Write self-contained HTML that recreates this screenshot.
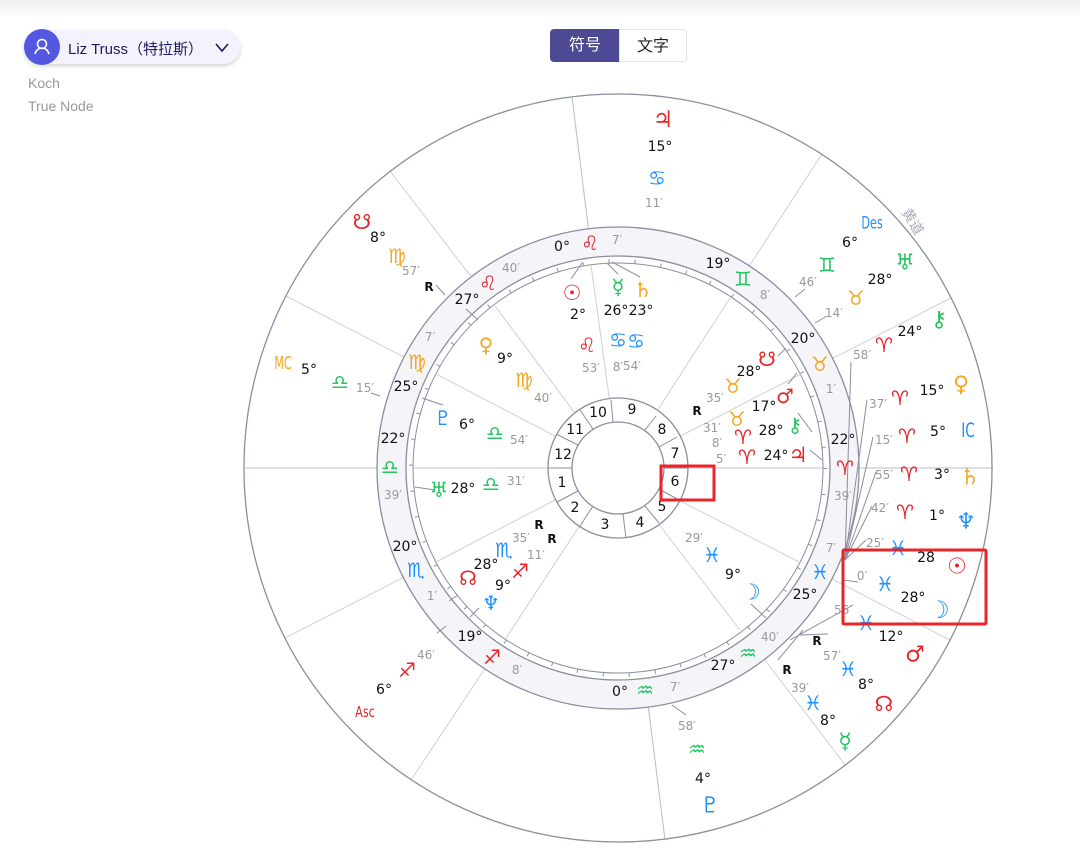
<!DOCTYPE html>
<html><head><meta charset="utf-8">
<style>
html,body{margin:0;padding:0;background:#fff;width:1080px;height:855px;overflow:hidden;font-family:"Liberation Sans","Noto Sans CJK SC",sans-serif}
.top{position:absolute;left:0;top:0;width:1080px;height:18px;background:linear-gradient(#f0f0f2,#fff)}
.pill{position:absolute;left:24px;top:30px;width:216px;height:34px;border-radius:17px;background:#f4f2fd;box-shadow:0 2px 4px rgba(0,0,0,.18)}
.av{position:absolute;left:0;top:0;width:36px;height:36px;margin-top:-1px;border-radius:18px;background:#5457e0}
.name{position:absolute;left:44px;top:8px;font-size:15px;color:#1d1a5c;white-space:nowrap}
.sub{position:absolute;left:28px;font-size:14px;color:#9a9a9a}
.seg{position:absolute;top:29px;height:33px;font-size:16px;line-height:33px;text-align:center;box-sizing:border-box}
svg text{font-family:"DejaVu Sans","Liberation Sans",sans-serif}
</style></head><body>
<div class="top"></div>
<div class="pill"><div class="av"><svg width="36" height="36"><circle cx="18" cy="15" r="4.5" fill="none" stroke="#fff" stroke-width="1.6"/><path d="M11 25c1-4 4-6 7-6s6 2 7 6" fill="none" stroke="#fff" stroke-width="1.6"/></svg></div>
<div class="name">Liz Truss（特拉斯）</div>
<svg style="position:absolute;left:190px;top:11px" width="16" height="12"><path d="M2 3l6 7 6-7" fill="none" stroke="#1d1a5c" stroke-width="1.6"/></svg></div>
<div class="sub" style="top:75px">Koch</div>
<div class="sub" style="top:98px">True Node</div>
<div class="seg" style="left:550px;width:70px;background:#4e4993;color:#fff;border-radius:4px 0 0 4px">符号</div>
<div class="seg" style="left:619px;width:68px;border:1px solid #e3e3e3;color:#222;border-radius:0 4px 4px 0">文字</div>

<svg width="1080" height="855" style="position:absolute;left:0;top:0" font-size="13" text-anchor="middle" dominant-baseline="central">
<g stroke="#d0d0d6" stroke-width="1">
<line x1="245" y1="468" x2="993" y2="468" stroke="#b9bcc8"/>
<line x1="572" y1="97" x2="665" y2="840" stroke="#b9bcc8"/>
<line x1="618" y1="468" x2="822" y2="154"/>
<line x1="618" y1="468" x2="951" y2="298"/>
<line x1="618" y1="468" x2="950" y2="640"/>
<line x1="618" y1="468" x2="846" y2="766"/>
<line x1="618" y1="468" x2="411" y2="780"/>
<line x1="618" y1="468" x2="285" y2="638"/>
<line x1="618" y1="468" x2="286" y2="296"/>
<line x1="618" y1="468" x2="390" y2="171"/>
</g>
<circle cx="618" cy="468" r="374" fill="none" stroke="#8a8ea0" stroke-width="1.3"/>
<circle cx="618" cy="468" r="226.5" fill="none" stroke="#f4f4f9" stroke-width="29"/>
<circle cx="618" cy="468" r="241" fill="none" stroke="#8a8ea0" stroke-width="1.3"/>
<circle cx="618" cy="468" r="212" fill="#fff" stroke="#8a8ea0" stroke-width="1.3"/>
<circle cx="618" cy="468" r="205" fill="none" stroke="#8a8ea0" stroke-width="1"/>
<circle cx="618" cy="468" r="207" fill="none" stroke="#8a8ea0" stroke-width="4" stroke-dasharray="1 25.1"/>
<g stroke="#d0d0d6">
<line x1="612" y1="418" x2="591" y2="265"/>
<line x1="648" y1="425" x2="730" y2="298"/>
<line x1="663" y1="445" x2="801" y2="374"/>
<line x1="663" y1="492" x2="801" y2="563"/>
<line x1="648" y1="510" x2="740" y2="630"/>
<line x1="590" y1="510" x2="506" y2="638"/>
<line x1="555" y1="500" x2="436" y2="562"/>
<line x1="555" y1="436" x2="436" y2="374"/>
<line x1="575" y1="413" x2="495" y2="306"/>
</g>
<line x1="413" y1="468" x2="823" y2="468" stroke="#c4c6d0"/>
<circle cx="618" cy="468" r="70" fill="#fff" stroke="#8a8ea0" stroke-width="1.3"/>
<circle cx="618" cy="468" r="46" fill="#fff" stroke="#8a8ea0" stroke-width="1.3"/>
<g stroke="#8a8ea0" stroke-width="1">
<line x1="613" y1="422" x2="611" y2="400"/><line x1="645" y1="430" x2="656" y2="416"/>
<line x1="659" y1="447" x2="677" y2="437"/><line x1="664" y1="468" x2="688" y2="468"/>
<line x1="659" y1="489" x2="679" y2="500"/><line x1="645" y1="506" x2="659" y2="523"/>
<line x1="623" y1="514" x2="626" y2="538"/><line x1="593" y1="506" x2="580" y2="526"/>
<line x1="578" y1="491" x2="557" y2="502"/><line x1="572" y1="468" x2="548" y2="468"/>
<line x1="578" y1="445" x2="556" y2="434"/><line x1="593" y1="429" x2="580" y2="410"/>
<line x1="845" y1="560" x2="851" y2="362"/><line x1="845" y1="560" x2="867" y2="400"/>
<line x1="845" y1="560" x2="873" y2="437"/><line x1="845" y1="560" x2="876" y2="472"/>
<line x1="845" y1="560" x2="872" y2="506"/><line x1="845" y1="560" x2="866" y2="540"/>
<line x1="843" y1="580" x2="858" y2="582"/><line x1="790" y1="640" x2="853" y2="605"/>
<line x1="778" y1="660" x2="803" y2="630"/><line x1="800" y1="635" x2="828" y2="634"/>
<line x1="795" y1="297" x2="805" y2="289"/><line x1="815" y1="323" x2="827" y2="316"/>
<line x1="571" y1="279" x2="582" y2="263"/><line x1="618" y1="274" x2="607" y2="263"/><line x1="640" y1="277" x2="612" y2="262"/>
<line x1="798" y1="413" x2="812" y2="432"/><line x1="810" y1="450" x2="822" y2="460"/>
<line x1="788" y1="384" x2="797" y2="373"/><line x1="778" y1="356" x2="786" y2="348"/>
<line x1="478" y1="320" x2="466" y2="309"/><line x1="443" y1="405" x2="422" y2="398"/>
<line x1="435" y1="490" x2="415" y2="487"/><line x1="458" y1="595" x2="449" y2="601"/>
<line x1="479" y1="608" x2="470" y2="617"/><line x1="751" y1="604" x2="766" y2="618"/>
<line x1="686" y1="715" x2="672" y2="705"/><line x1="437" y1="633" x2="446" y2="626"/>
<line x1="436" y1="285" x2="445" y2="295"/>
<line x1="371" y1="393" x2="380" y2="396"/>
</g>
<g font-size="14" fill="#111">
<text x="598" y="413">10</text><text x="632" y="410">9</text><text x="662" y="430">8</text><text x="675" y="454">7</text><text x="675" y="482">6</text><text x="662" y="507">5</text><text x="640" y="523">4</text><text x="605" y="525">3</text><text x="575" y="508">2</text><text x="562" y="483">1</text><text x="563" y="455">12</text><text x="575" y="430">11</text>
</g>
<g font-size="14" fill="#111">
<text x="660" y="147">15°</text><text x="378" y="238">8°</text><text x="309" y="370">5°</text>
<text x="850" y="243">6°</text><text x="880" y="280">28°</text><text x="910" y="332">24°</text><text x="932" y="391">15°</text><text x="938" y="432">5°</text><text x="942" y="475">3°</text><text x="937" y="516">1°</text>
<text x="926" y="558">28</text><text x="913" y="598">28°</text><text x="891" y="637">12°</text><text x="866" y="685">8°</text><text x="828" y="721">8°</text>
<text x="620" y="692">0°</text><text x="703" y="779">4°</text><text x="723" y="666">27°</text><text x="470" y="637">19°</text><text x="384" y="690">6°</text>
<text x="405" y="547">20°</text><text x="393" y="439">22°</text><text x="406" y="387">25°</text><text x="467" y="300">27°</text><text x="562" y="247">0°</text><text x="718" y="264">19°</text><text x="803" y="339">20°</text><text x="843" y="440">22°</text><text x="805" y="595">25°</text>
<text x="578" y="315">2°</text><text x="616" y="311">26°</text><text x="641" y="311">23°</text><text x="505" y="359">9°</text><text x="467" y="425">6°</text><text x="463" y="489">28°</text><text x="486" y="565">28°</text><text x="503" y="586">9°</text>
<text x="749" y="372">28°</text><text x="764" y="407">17°</text><text x="771" y="431">28°</text><text x="776" y="456">24°</text><text x="733" y="575">9°</text>
</g>
<g font-size="12" font-weight="bold" fill="#111">
<text x="429" y="287">R</text><text x="817" y="641">R</text><text x="787" y="670">R</text><text x="539" y="525">R</text><text x="552" y="539">R</text><text x="697" y="411">R</text>
</g>
<g font-size="12" fill="#999">
<text x="654" y="203">11′</text><text x="411" y="271">57′</text><text x="365" y="388">15′</text><text x="808" y="282">46′</text><text x="834" y="313">14′</text><text x="862" y="355">58′</text><text x="878" y="404">37′</text><text x="884" y="440">15′</text><text x="884" y="475">55′</text><text x="880" y="508">42′</text>
<text x="875" y="543">25′</text><text x="862" y="576">0′</text><text x="843" y="610">56′</text><text x="832" y="656">57′</text><text x="800" y="688">39′</text>
<text x="675" y="687">7′</text><text x="687" y="726">58′</text><text x="770" y="637">40′</text><text x="517" y="670">8′</text><text x="426" y="655">46′</text>
<text x="432" y="596">1′</text><text x="393" y="495">39′</text><text x="430" y="337">7′</text><text x="511" y="268">40′</text><text x="617" y="240">7′</text><text x="765" y="295">8′</text><text x="831" y="389">1′</text><text x="843" y="496">39′</text><text x="831" y="548">7′</text>
<text x="591" y="368">53′</text><text x="618" y="367">8′</text><text x="632" y="366">54′</text><text x="543" y="398">40′</text><text x="519" y="440">54′</text><text x="516" y="481">31′</text><text x="521" y="538">35′</text><text x="536" y="555">11′</text>
<text x="715" y="398">35′</text><text x="712" y="428">31′</text><text x="717" y="443">8′</text><text x="721" y="459">5′</text><text x="694" y="538">29′</text>
</g>
<g font-size="20">
<g fill="#e8262a">
<text x="663" y="120" font-size="23">♃</text><text x="362" y="222" font-size="21">☋</text><text x="884" y="345">♈</text><text x="900" y="398">♈</text><text x="907" y="436">♈</text><text x="909" y="474">♈</text><text x="905" y="512">♈</text>
<text x="957" y="567" font-size="22">☉</text><text x="915" y="655" font-size="22">♂</text><text x="884" y="704" font-size="21">☊</text>
<text x="492" y="657">♐</text><text x="407" y="670">♐</text><text x="365" y="713" font-size="14" font-family="Liberation Sans" transform="translate(365 713) scale(.8 1.1) translate(-365 -713)">Asc</text>
<text x="488" y="283">♌</text><text x="590" y="243">♌</text><text x="845" y="468">♈</text>
<text x="572" y="293" font-size="21">☉</text><text x="587" y="345">♌</text><text x="468" y="578" font-size="20">☊</text><text x="520" y="571">♐</text>
<text x="767" y="359" font-size="20">☋</text><text x="785" y="396" font-size="20">♂</text><text x="743" y="437">♈</text><text x="747" y="457">♈</text><text x="798" y="455" font-size="21">♃</text>
</g>
<g fill="#f5a623">
<text x="397" y="256">♍</text><text x="283" y="363" font-size="15" font-family="Liberation Sans" transform="translate(283 363) scale(.75 1.2) translate(-283 -363)">MC</text><text x="856" y="298">♉</text><text x="961" y="385" font-size="22">♀</text><text x="970" y="478" font-size="22">♄</text>
<text x="417" y="362">♍</text><text x="820" y="364">♉</text><text x="643" y="290" font-size="21">♄</text><text x="486" y="345" font-size="20">♀</text><text x="524" y="380">♍</text><text x="733" y="386">♉</text><text x="737" y="419">♉</text>
</g>
<g fill="#22c55e">
<text x="340" y="382">♎</text><text x="827" y="265">♊</text><text x="905" y="263" font-size="22">♅</text><text x="939" y="320" font-size="22">⚷</text><text x="845" y="742" font-size="22">☿</text>
<text x="645" y="690">♒</text><text x="697" y="749">♒</text><text x="748" y="653">♒</text><text x="390" y="467">♎</text><text x="743" y="279">♊</text>
<text x="618" y="287" font-size="21">☿</text><text x="495" y="433">♎</text><text x="439" y="490" font-size="21">♅</text><text x="491" y="484">♎</text><text x="795" y="425" font-size="20">⚷</text>
</g>
<g fill="#1e90ff">
<text x="657" y="178">♋</text><text x="872" y="224" font-size="14" font-family="Liberation Sans" transform="translate(872 224) scale(.8 1.2) translate(-872 -224)">Des</text><text x="968" y="430" font-size="17" font-family="Liberation Sans" transform="translate(968 430) scale(.8 1.15) translate(-968 -430)">IC</text><text x="966" y="522" font-size="22">♆</text>
<text x="898" y="548">♓</text><text x="885" y="584">♓</text><text x="939" y="610" font-size="24">☽</text><text x="866" y="623">♓</text><text x="848" y="669">♓</text><text x="813" y="703">♓</text>
<text x="710" y="806" font-size="22">♇</text><text x="416" y="570">♏</text><text x="820" y="572">♓</text>
<text x="618" y="340">♋</text><text x="636" y="341">♋</text><text x="443" y="418" font-size="20">♇</text><text x="504" y="550">♏</text><text x="491" y="603" font-size="20">♆</text><text x="712" y="555">♓</text><text x="751" y="593" font-size="22">☽</text>
</g>
</g>
<text x="912" y="222" font-size="14" fill="#a8acb8" font-family="Noto Sans CJK SC" transform="rotate(58 912 222)">黄道</text>
<rect x="661" y="466" width="53" height="34" fill="none" stroke="#e8262a" stroke-width="3"/>
<rect x="843" y="550" width="143" height="74" fill="none" stroke="#e8262a" stroke-width="3" rx="1"/>
</svg>
</body></html>
